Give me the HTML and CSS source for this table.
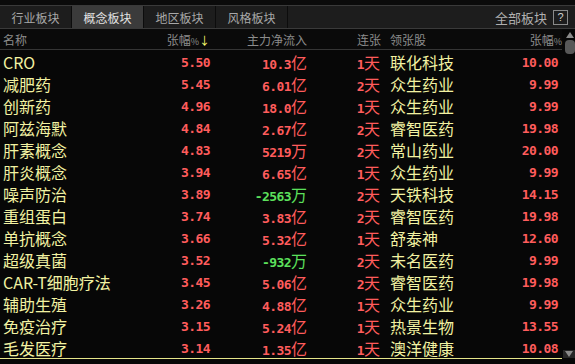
FILE: index.html
```html
<!DOCTYPE html>
<html lang="zh">
<head>
<meta charset="utf-8">
<link rel="stylesheet" href="styles.css">
</head>
<body>
<div class="app">
  <div class="topstrip"></div>
  <div class="tabbar">
    <div class="tab">行业板块</div>
    <div class="tab active">概念板块</div>
    <div class="tab">地区板块</div>
    <div class="tab">风格板块</div>
    <div class="spacer"></div>
    <div class="all">全部板块</div>
    <div class="help">?</div>
  </div>
  <div class="body">
    <div class="table">
      <div class="row head">
        <div class="c-name">名称</div>
        <div class="c-pct">张幅<span class="pc">%</span><span class="arrow">↓</span></div>
        <div class="c-flow">主力净流入</div>
        <div class="c-days">连张</div>
        <div class="c-lead">领张股</div>
        <div class="c-lpct hl">张幅<span class="pc">%</span></div>
      </div>
      <div class="row"><div class="c-name">CRO</div><div class="c-pct num">5.50</div><div class="c-flow"><span class="num">10.3</span><span class="u">亿</span></div><div class="c-days"><span class="num">1</span><span class="u">天</span></div><div class="c-lead">联化科技</div><div class="c-lpct num">10.00</div></div>
      <div class="row"><div class="c-name">减肥药</div><div class="c-pct num">5.45</div><div class="c-flow"><span class="num">6.01</span><span class="u">亿</span></div><div class="c-days"><span class="num">2</span><span class="u">天</span></div><div class="c-lead">众生药业</div><div class="c-lpct num">9.99</div></div>
      <div class="row"><div class="c-name">创新药</div><div class="c-pct num">4.96</div><div class="c-flow"><span class="num">18.0</span><span class="u">亿</span></div><div class="c-days"><span class="num">1</span><span class="u">天</span></div><div class="c-lead">众生药业</div><div class="c-lpct num">9.99</div></div>
      <div class="row"><div class="c-name">阿兹海默</div><div class="c-pct num">4.84</div><div class="c-flow"><span class="num">2.67</span><span class="u">亿</span></div><div class="c-days"><span class="num">2</span><span class="u">天</span></div><div class="c-lead">睿智医药</div><div class="c-lpct num">19.98</div></div>
      <div class="row"><div class="c-name">肝素概念</div><div class="c-pct num">4.83</div><div class="c-flow"><span class="num">5219</span><span class="u">万</span></div><div class="c-days"><span class="num">2</span><span class="u">天</span></div><div class="c-lead">常山药业</div><div class="c-lpct num">20.00</div></div>
      <div class="row"><div class="c-name">肝炎概念</div><div class="c-pct num">3.94</div><div class="c-flow"><span class="num">6.65</span><span class="u">亿</span></div><div class="c-days"><span class="num">1</span><span class="u">天</span></div><div class="c-lead">众生药业</div><div class="c-lpct num">9.99</div></div>
      <div class="row"><div class="c-name">噪声防治</div><div class="c-pct num">3.89</div><div class="c-flow green"><span class="num">-2563</span><span class="u">万</span></div><div class="c-days"><span class="num">2</span><span class="u">天</span></div><div class="c-lead">天铁科技</div><div class="c-lpct num">14.15</div></div>
      <div class="row"><div class="c-name">重组蛋白</div><div class="c-pct num">3.74</div><div class="c-flow"><span class="num">3.83</span><span class="u">亿</span></div><div class="c-days"><span class="num">2</span><span class="u">天</span></div><div class="c-lead">睿智医药</div><div class="c-lpct num">19.98</div></div>
      <div class="row"><div class="c-name">单抗概念</div><div class="c-pct num">3.66</div><div class="c-flow"><span class="num">5.32</span><span class="u">亿</span></div><div class="c-days"><span class="num">1</span><span class="u">天</span></div><div class="c-lead">舒泰神</div><div class="c-lpct num">12.60</div></div>
      <div class="row"><div class="c-name">超级真菌</div><div class="c-pct num">3.52</div><div class="c-flow green"><span class="num">-932</span><span class="u">万</span></div><div class="c-days"><span class="num">2</span><span class="u">天</span></div><div class="c-lead">未名医药</div><div class="c-lpct num">9.99</div></div>
      <div class="row"><div class="c-name">CAR-T细胞疗法</div><div class="c-pct num">3.45</div><div class="c-flow"><span class="num">5.06</span><span class="u">亿</span></div><div class="c-days"><span class="num">2</span><span class="u">天</span></div><div class="c-lead">睿智医药</div><div class="c-lpct num">19.98</div></div>
      <div class="row"><div class="c-name">辅助生殖</div><div class="c-pct num">3.26</div><div class="c-flow"><span class="num">4.88</span><span class="u">亿</span></div><div class="c-days"><span class="num">1</span><span class="u">天</span></div><div class="c-lead">众生药业</div><div class="c-lpct num">9.99</div></div>
      <div class="row"><div class="c-name">免疫治疗</div><div class="c-pct num">3.15</div><div class="c-flow"><span class="num">5.24</span><span class="u">亿</span></div><div class="c-days"><span class="num">1</span><span class="u">天</span></div><div class="c-lead">热景生物</div><div class="c-lpct num">13.55</div></div>
      <div class="row"><div class="c-name">毛发医疗</div><div class="c-pct num">3.14</div><div class="c-flow"><span class="num">1.35</span><span class="u">亿</span></div><div class="c-days"><span class="num">1</span><span class="u">天</span></div><div class="c-lead">澳洋健康</div><div class="c-lpct num">10.08</div></div>
      <div class="endline"></div>
    </div>
    <div class="scroll">
      <div class="up"></div>
      <div class="thumb"></div>
      <div class="track"></div>
      <div class="down"></div>
    </div>
  </div>
</div>
</body>
</html>
```

FILE: styles.css
```css
* { box-sizing: border-box; }
html, body { margin: 0; padding: 0; background: #070707; }
body {
  width: 575px; height: 364px; overflow: hidden;
  font-family: "Noto Sans CJK SC", "Liberation Sans", sans-serif;
}
.app { width: 575px; height: 364px; display: flex; flex-direction: column; }
.topstrip { height: 6px; background: #0b0b0b; border-bottom: 1px solid #3a3a3a; }
.tabbar {
  height: 23px; display: flex; align-items: stretch;
  background: #1d1d1d; border-bottom: 1px solid #3a3a3a;
}
.tab {
  width: 72px; display: flex; align-items: center; justify-content: center;
  font-size: 12px; color: #a8a8a8; border-right: 1px solid #0c0c0c;
}
.tab.active { background: #3b3b3b; color: #e2e2e2; }
.spacer { flex: 1; }
.all { display: flex; align-items: center; font-size: 13px; color: #b0b0b0; margin-right: 6px; }
.help {
  align-self: center; width: 15px; height: 15px; border: 1px solid #8a8a8a;
  color: #d0d0d0; font-size: 11px; display: flex; align-items: center; justify-content: center;
  margin-right: 7px; font-family: "Liberation Sans", sans-serif; line-height: 1;
}
.body { flex: 1; display: flex; }
.table { width: 562px; display: flex; flex-direction: column; }
.row {
  height: 22px; display: grid;
  grid-template-columns: 150px 57px 97px 73px 10px 110px 58px;
  padding-left: 3px; align-items: center;
  font-size: 16px; color: #ff5c5c; white-space: nowrap;
}
.row > .c-lead { grid-column: 6; }
.row.head {
  height: 21px; font-size: 12px; color: #8c8c8c;
  border-bottom: 1px solid #353535; background: #0a0a0a;
}
.c-name { color: #f2f2a2; }
.head .c-name { color: #8c8c8c; }
.c-pct, .c-flow, .c-days, .c-lpct { text-align: right; }
.head .c-days { text-align: left; padding-left: 50px; }
.head .hl { margin-right: -4px; }
.c-lead { color: #f2f2a2; padding-left: 0; }
.head .c-lead { color: #8c8c8c; }
.pc { font-size: 9px; }
.arrow { color: #ffff70; font-size: 11px; }
.num {
  font-family: "DejaVu Sans Mono", monospace; font-weight: bold;
  font-size: 13px; letter-spacing: -0.6px;
}
.u { font-size: 16px; }
.green { color: #5ce05c; }
.endline { height: 1px; background: #e6e68a; }
.scroll { flex: 1; display: flex; flex-direction: column; align-items: center; padding-top: 3px; }
.up {
  width: 0; height: 0; border-left: 4px solid transparent; border-right: 4px solid transparent;
  border-bottom: 6px solid #8a8a8a; margin-left: 2px;
}
.thumb { width: 10px; height: 14px; background: #585858; border-radius: 4px; margin-top: 2px; margin-left: 2px; }
.track { flex: 1; }
.down {
  width: 12px; height: 8px; background: #262626; display: flex; justify-content: center;
  margin-bottom: 6px; margin-left: 1px; position: relative;
}
.down::after {
  content: ""; width: 0; height: 0; margin-top: 1px;
  border-left: 4px solid transparent; border-right: 4px solid transparent;
  border-top: 6px solid #8a8a8a;
}
```
